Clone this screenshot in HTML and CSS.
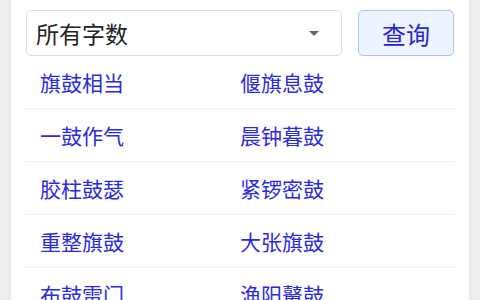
FILE: index.html
```html
<!DOCTYPE html>
<html lang="zh-CN">

<head>
    <meta charset="UTF-8">
    <meta name="viewport" content="width=device-width, initial-scale=1.0">
    <title>成语查询</title>
    <link rel="stylesheet" href="styles.css">
</head>

<body>
    <div class="container">
        <div class="search-bar">
            <div class="select-box">
                <span class="select-text">所有字数</span>
                <span class="select-arrow"></span>
            </div>
            <button class="search-button">查询</button>
        </div>

        <div class="word-list">
            <div class="word-row">
                <a href="#" class="word">旗鼓相当</a>
                <a href="#" class="word">偃旗息鼓</a>
            </div>
            <div class="word-row">
                <a href="#" class="word">一鼓作气</a>
                <a href="#" class="word">晨钟暮鼓</a>
            </div>
            <div class="word-row">
                <a href="#" class="word">胶柱鼓瑟</a>
                <a href="#" class="word">紧锣密鼓</a>
            </div>
            <div class="word-row">
                <a href="#" class="word">重整旗鼓</a>
                <a href="#" class="word">大张旗鼓</a>
            </div>
            <div class="word-row">
                <a href="#" class="word">布鼓雷门</a>
                <a href="#" class="word">渔阳鼙鼓</a>
            </div>
        </div>
    </div>
</body>

</html>
```

FILE: styles.css
```css
body {
    font-family: "Noto Sans CJK SC", "Noto Sans", sans-serif;
    margin: 0;
    background-color: #eeeeee;
    height: 300px;
    overflow: hidden;
}

.container {
    margin: 0 10px;
    height: 300px;
    padding: 10px 15px 0;
    box-sizing: border-box;
    background-color: #fff;
    border-left: 1px solid #e2e2e2;
    border-right: 1px solid #e2e2e2;
    overflow: hidden;
}

.search-bar {
    display: flex;
    gap: 16px;
    height: 46px;
}

.select-box {
    flex: 1;
    display: flex;
    align-items: center;
    justify-content: space-between;
    padding: 0 22px 0 9px;
    border: 1px solid #d9dde2;
    border-radius: 5px;
}

.select-text {
    font-size: 23px;
    color: #222;
}

.select-arrow {
    width: 0;
    height: 0;
    border-left: 5px solid transparent;
    border-right: 5px solid transparent;
    border-top: 5px solid #666;
}

.search-button {
    width: 96px;
    font-family: inherit;
    font-size: 24px;
    color: #2424d8;
    background-color: #eef4ff;
    border: 1px solid #a9c6f5;
    border-radius: 5px;
    cursor: pointer;
}

.word-row {
    display: grid;
    grid-template-columns: 200px 1fr;
    height: 52px;
    align-items: center;
    border-bottom: 1px solid #f0f0f0;
}

.word {
    padding-left: 14px;
    font-size: 21px;
    color: #2a2ae0;
    text-decoration: none;
}
```
